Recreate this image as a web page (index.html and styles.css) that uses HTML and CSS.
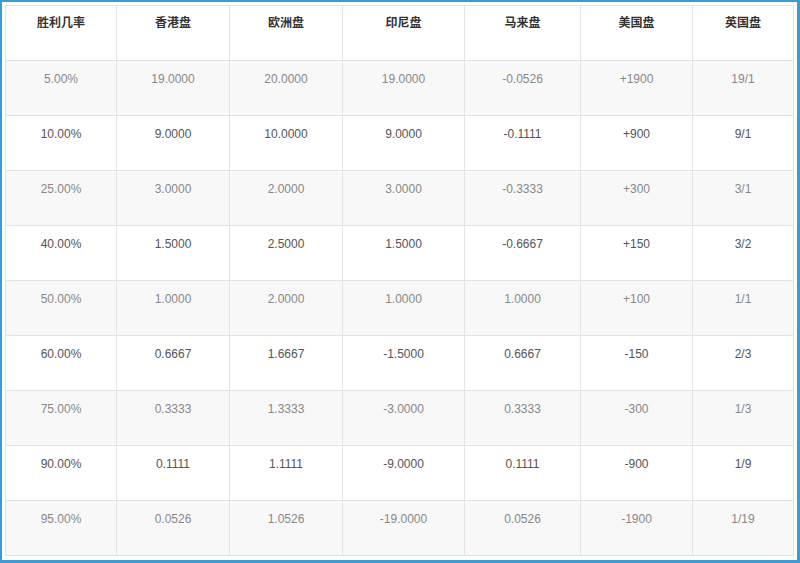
FILE: index.html
```html
<!DOCTYPE html>
<html>
<head>
<meta charset="utf-8">
<link rel="stylesheet" href="styles.css">
</head>
<body>
<div class="frame">
<table class="odds">
<colgroup>
<col class="c1"><col class="c2"><col class="c3"><col class="c4"><col class="c5"><col class="c6"><col class="c7">
</colgroup>
<thead>
<tr><th>胜利几率</th><th>香港盘</th><th>欧洲盘</th><th>印尼盘</th><th>马来盘</th><th>美国盘</th><th>英国盘</th></tr>
</thead>
<tbody>
<tr class="odd"><td>5.00%</td><td>19.0000</td><td>20.0000</td><td>19.0000</td><td>-0.0526</td><td>+1900</td><td>19/1</td></tr>
<tr><td>10.00%</td><td>9.0000</td><td>10.0000</td><td>9.0000</td><td>-0.1111</td><td>+900</td><td>9/1</td></tr>
<tr class="odd"><td>25.00%</td><td>3.0000</td><td>2.0000</td><td>3.0000</td><td>-0.3333</td><td>+300</td><td>3/1</td></tr>
<tr><td>40.00%</td><td>1.5000</td><td>2.5000</td><td>1.5000</td><td>-0.6667</td><td>+150</td><td>3/2</td></tr>
<tr class="odd"><td>50.00%</td><td>1.0000</td><td>2.0000</td><td>1.0000</td><td>1.0000</td><td>+100</td><td>1/1</td></tr>
<tr><td>60.00%</td><td>0.6667</td><td>1.6667</td><td>-1.5000</td><td>0.6667</td><td>-150</td><td>2/3</td></tr>
<tr class="odd"><td>75.00%</td><td>0.3333</td><td>1.3333</td><td>-3.0000</td><td>0.3333</td><td>-300</td><td>1/3</td></tr>
<tr><td>90.00%</td><td>0.1111</td><td>1.1111</td><td>-9.0000</td><td>0.1111</td><td>-900</td><td>1/9</td></tr>
<tr class="odd"><td>95.00%</td><td>0.0526</td><td>1.0526</td><td>-19.0000</td><td>0.0526</td><td>-1900</td><td>1/19</td></tr>
</tbody>
</table>
</div>
</body>
</html>
```
FILE: styles.css
```css
html, body {
  margin: 0;
  padding: 0;
  background: #ffffff;
}
.frame {
  box-sizing: border-box;
  width: 800px;
  height: 563px;
  border-style: solid;
  border-color: #3d9ad2;
  border-width: 2px 3px 3px 2px;
  padding: 3px 4px 0 3px;
  background: #ffffff;
  font-family: "Liberation Sans", Arial, "Noto Sans CJK SC", sans-serif;
  font-size: 12px;
}
.odds {
  border-collapse: collapse;
  table-layout: fixed;
  width: 788px;
  border: 1px solid #e3e3e3;
}
.c1 { width: 111px; }
.c2 { width: 113px; }
.c3 { width: 113px; }
.c4 { width: 122px; }
.c5 { width: 116px; }
.c6 { width: 112px; }
.c7 { width: 101px; }
.odds th, .odds td {
  border: 1px solid #e3e3e3;
  height: 55px;
  box-sizing: border-box;
  padding: 8px 4px 0 4px;
  line-height: 20px;
  vertical-align: top;
  text-align: center;
}
.odds th {
  color: #333333;
  font-weight: bold;
  padding-top: 7px;
  background: #ffffff;
}
.odds td {
  color: #555555;
}
.odds tr.odd td {
  background: #f8f8f8;
  color: #888888;
}
```
